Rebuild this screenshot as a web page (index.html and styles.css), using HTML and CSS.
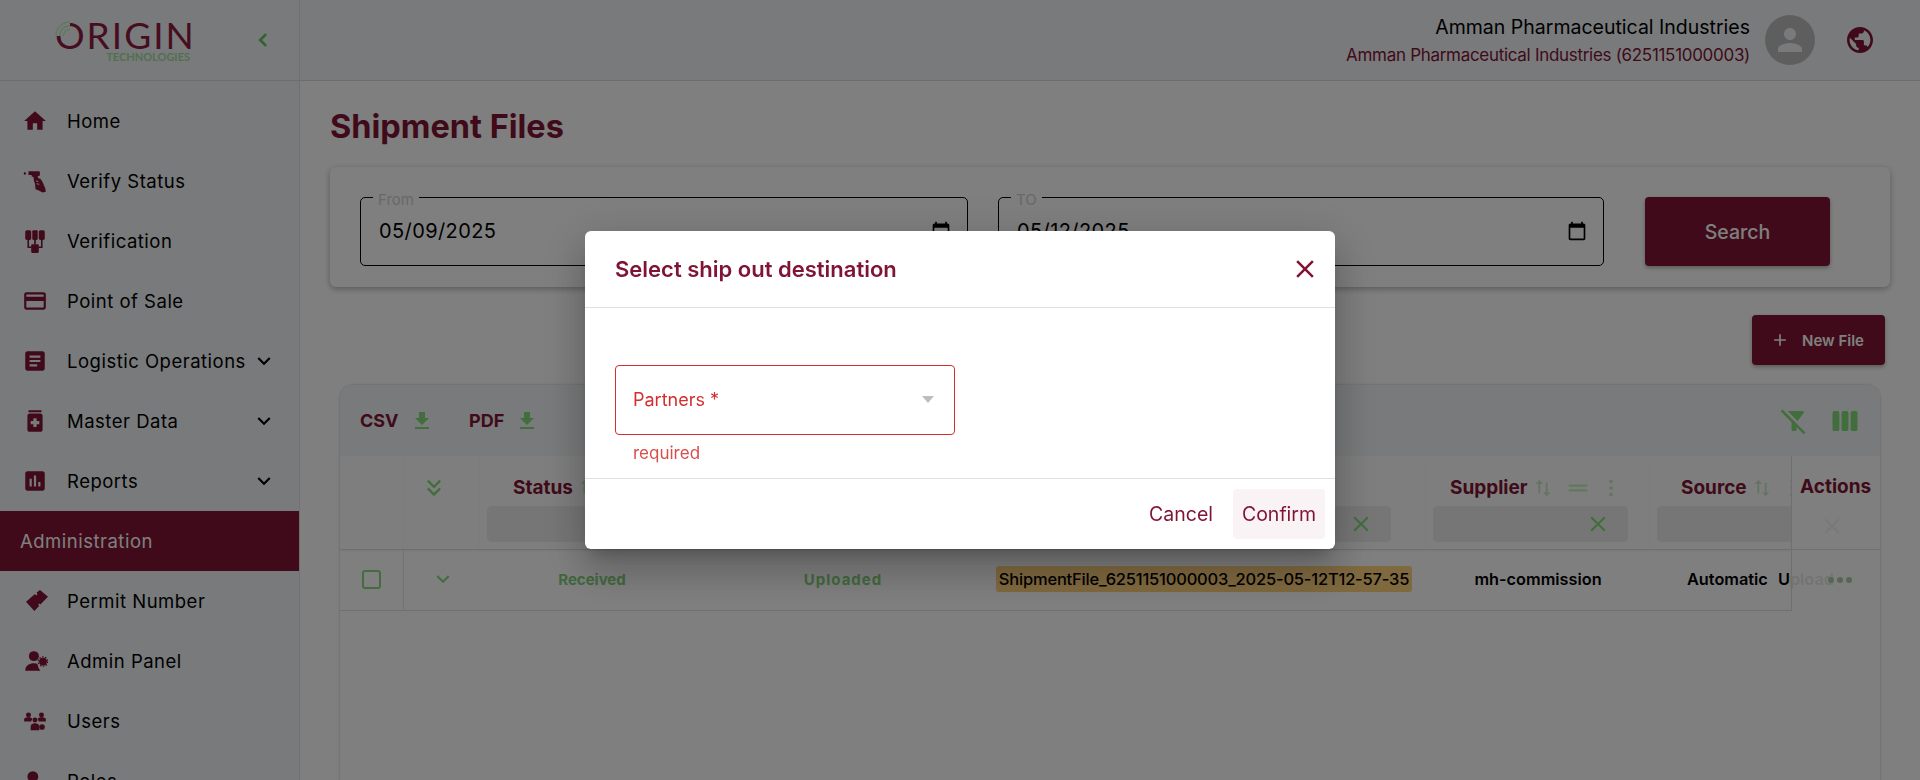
FILE: index.html
```html
<!DOCTYPE html>
<html lang="en">

<head>
  <meta charset="UTF-8">
  <title>Shipment Files</title>
  <link rel="stylesheet" href="styles.css">
</head>

<body>
  <aside class="sidebar">
    <div class="brand">
      <div class="logo">
        <div class="logo-name">ORIGIN</div>
        <svg class="logo-arcs" viewBox="0 0 16 16"><path d="M0 0h16v16H0z" fill="#f3f5f7"/><path d="M1 16A15 15 0 0 1 16 1M5 16A11 11 0 0 1 16 5M9 16A7 7 0 0 1 16 9" fill="none" stroke="#b8f0b0" stroke-width="1.3"/></svg>
        <div class="logo-sub">TECHNOLOGIES</div>
      </div>
      <svg class="collapse" viewBox="0 0 24 24"><path d="M15.41 7.41 14 6l-6 6 6 6 1.41-1.41L10.83 12z"/></svg>
    </div>
    <nav class="menu">
      <a class="item"><svg class="ico" viewBox="0 0 24 24"><path d="M10 20v-6h4v6h5v-8h3L12 3 2 12h3v8z"/></svg>Home</a>
      <a class="item"><svg class="ico" viewBox="0 0 24 24"><path fill-rule="evenodd" d="M2.500 3.500 4 5 2.500 6.500 1.500 5zM6 3h10l.5 1v3l-2 .5.5 2 2 .5 2 3 2.500 6 .5 3-3 .5-4-2-2.500-1-.5-5-1-3-.5-3.500H9V6.500H6zM13 11.500l2 .5v1l-2-.5zM13.500 14l2.500.5v1l-2.500-.5z"/></svg>Verify Status</a>
      <a class="item"><svg class="ico" viewBox="0 0 24 24"><rect x="3" y="2" width="5.500" height="9" rx="1.500"/><rect x="9.500" y="2" width="5" height="9" rx="1"/><rect x="15.500" y="2" width="5.500" height="9" rx="1.500"/><path d="M5 11h1.500v6H9v1.500H5zM19 11h-1.500v6H15v1.500h4zM11.200 11h1.600v4h-1.600z"/><rect x="8.500" y="15" width="7" height="8" rx="1"/></svg>Verification</a>
      <a class="item"><svg class="ico" viewBox="0 0 24 24"><path d="M20 4H4c-1.110 0-1.990.89-1.990 2L2 18c0 1.110.89 2 2 2h16c1.110 0 2-.89 2-2V6c0-1.110-.89-2-2-2zm0 14H4v-6h16v6zm0-10H4V6h16v2z"/></svg>Point of Sale</a>
      <a class="item"><svg class="ico" viewBox="0 0 24 24"><path d="M19 3H5c-1.100 0-2 .9-2 2v14c0 1.100.9 2 2 2h14c1.100 0 2-.9 2-2V5c0-1.100-.9-2-2-2zm-5 14H7v-2h7v2zm3-4H7v-2h10v2zm0-4H7V7h10v2z"/></svg>Logistic Operations<svg class="caret" viewBox="0 0 24 24"><path d="M16.59 8.59 12 13.170 7.41 8.59 6 10l6 6 6-6z"/></svg></a>
      <a class="item"><svg class="ico" viewBox="0 0 24 24"><path d="M6 2h12v2H6zm11 3H7c-1.100 0-2 .9-2 2v13c0 1.100.9 2 2 2h10c1.100 0 2-.9 2-2V7c0-1.100-.9-2-2-2zm-1 10h-2.500v2.500h-3V15H8v-3h2.500V9.500h3V12H16v3z"/></svg>Master Data<svg class="caret" viewBox="0 0 24 24"><path d="M16.59 8.59 12 13.170 7.41 8.59 6 10l6 6 6-6z"/></svg></a>
      <a class="item"><svg class="ico" viewBox="0 0 24 24"><path d="M19 3H5c-1.100 0-2 .9-2 2v14c0 1.100.9 2 2 2h14c1.100 0 2-.9 2-2V5c0-1.100-.9-2-2-2zM9 17H7v-7h2v7zm4 0h-2V7h2v10zm4 0h-2v-4h2v4z"/></svg>Reports<svg class="caret" viewBox="0 0 24 24"><path d="M16.59 8.59 12 13.170 7.41 8.59 6 10l6 6 6-6z"/></svg></a>
      <div class="section">Administration</div>
      <a class="item"><svg class="ico" viewBox="0 0 24 24"><path d="M3.700 12.600 12 5.500l1 1.500 1.200-1-.7-1.800 3.100-2.400L24 8l-7 7.300-1-1-1 1 .8 1.200-4.400 4.700z"/></svg>Permit Number</a>
      <a class="item"><svg class="ico" viewBox="0 0 24 24"><circle cx="11" cy="7.500" r="4.600"/><path d="M3 21c0-5 4-7 8-7 1.200 0 2.300.2 3.300.5.200 2.500 1.200 4.800 2.700 6.500z"/><circle cx="19.400" cy="12.500" r="3.600"/><circle cx="19.400" cy="12.500" r="4.300" fill="none" stroke="currentColor" stroke-width="1.200" stroke-dasharray="1.400 1.300"/></svg>Admin Panel</a>
      <a class="item"><svg class="ico" viewBox="0 0 24 24"><circle cx="6" cy="6.500" r="2.300"/><circle cx="18" cy="6.500" r="2.300"/><circle cx="12" cy="11" r="2.300"/><path d="M2 10c0-1 2-1.500 4-1.500s3 .5 3.500 1.500l-1 2.500H2zM22 10c0-1-2-1.500-4-1.500s-3 .5-3.500 1.500l1 2.500H22zM8 17c0-2 2-3 4-3s4 1 4 3v3.500H8z"/><circle cx="18.500" cy="17.500" r="2.600"/></svg>Users</a>
      <a class="item"><svg class="ico" viewBox="0 0 24 24"><path d="M10 3a5 5 0 1 1 0 10 5 5 0 0 1 0-10zM10 15c3.500 0 9 1.500 9 4.500V22H1v-2.500C1 16.500 6.500 15 10 15z"/></svg>Roles</a>
    </nav>
  </aside>

  <div class="content">
    <header class="topbar">
      <div class="account">
        <div class="account-name">Amman Pharmaceutical Industries</div>
        <div class="account-org">Amman Pharmaceutical Industries (6251151000003)</div>
      </div>
      <div class="avatar"><svg viewBox="0 0 24 24"><path d="M12 12c2.210 0 4-1.790 4-4s-1.790-4-4-4-4 1.790-4 4 1.790 4 4 4zm0 2c-2.670 0-8 1.340-8 4v2h16v-2c0-2.660-5.330-4-8-4z"/></svg></div>
      <svg class="globe" viewBox="2 2 20 20"><path d="M12 2C6.480 2 2 6.480 2 12s4.480 10 10 10 10-4.480 10-10S17.520 2 12 2zm-1 17.930c-3.950-.49-7-3.850-7-7.930 0-.62.08-1.210.21-1.790L9 15v1c0 1.100.9 2 2 2v1.930zm6.900-2.540c-.26-.81-1-1.390-1.900-1.390h-1v-3c0-.55-.45-1-1-1H8v-2h2c.55 0 1-.45 1-1V7h2c1.100 0 2-.9 2-2v-.41c2.930 1.190 5 4.060 5 7.410 0 2.080-.8 3.970-2.100 5.390z"/></svg>
    </header>

    <main class="page">
      <h1 class="title">Shipment Files</h1>

      <section class="filters">
        <fieldset class="date-field">
          <legend>From</legend>
          <span class="date-value">05/09/2025</span>
          <svg class="calendar" viewBox="0 0 24 24"><path d="M20 3h-1V1h-2v2H7V1H5v2H4c-1.100 0-2 .9-2 2v16c0 1.100.9 2 2 2h16c1.100 0 2-.9 2-2V5c0-1.100-.9-2-2-2zm0 18H4V8h16v13z"/></svg>
        </fieldset>
        <fieldset class="date-field">
          <legend>TO</legend>
          <span class="date-value">05/12/2025</span>
          <svg class="calendar" viewBox="0 0 24 24"><path d="M20 3h-1V1h-2v2H7V1H5v2H4c-1.100 0-2 .9-2 2v16c0 1.100.9 2 2 2h16c1.100 0 2-.9 2-2V5c0-1.100-.9-2-2-2zm0 18H4V8h16v13z"/></svg>
        </fieldset>
        <button class="search-btn">Search</button>
      </section>

      <div class="new-file-row">
        <button class="new-file"><svg viewBox="0 0 24 24"><path d="M19 13h-6v6h-2v-6H5v-2h6V5h2v6h6v2z"/></svg>New File</button>
      </div>

      <section class="table-card">
        <div class="toolbar">
          <span class="export">CSV<svg viewBox="0 0 24 24"><path d="M19 9h-4V3H9v6H5l7 7 7-7zM5 18v2h14v-2H5z"/></svg></span>
          <span class="export">PDF<svg viewBox="0 0 24 24"><path d="M19 9h-4V3H9v6H5l7 7 7-7zM5 18v2h14v-2H5z"/></svg></span>
          <span class="toolbar-right">
            <svg viewBox="0 0 24 24"><path d="M19.79 5.610C20.300 4.950 19.830 4 19 4H6.830l7.970 7.970 4.990-6.360zM2.810 2.810 1.390 4.220 10 13v6c0 .55.450 1 1 1h2c.55 0 1-.45 1-1v-2.170l5.780 5.780 1.410-1.410L2.810 2.810z"/></svg>
            <svg viewBox="0 0 24 24"><rect x="2" y="4" width="5.500" height="16" rx="1.500"/><rect x="9.250" y="4" width="5.500" height="16" rx="1.500"/><rect x="16.500" y="4" width="5.500" height="16" rx="1.500"/></svg>
          </span>
        </div>

        <div class="grid">
          <div class="head-cell"></div>
          <div class="head-cell expand-all"><svg viewBox="0 0 24 24"><path d="M18 6.410 16.590 5 12 9.580 7.410 5 6 6.410l6 6zM18 13l-1.410-1.410L12 16.170l-4.590-4.580L6 13l6 6z"/></svg></div>
          <div class="head-cell">
            <div class="col-label">
              <span class="col-name">Status</span>
              <svg class="faint" viewBox="0 0 24 24"><path d="M8 3 4 7.500h3V18h2V7.500h3zM16 21l4-4.500h-3V6h-2v10.500h-3z"/></svg>
            </div>
            <div class="col-filter"></div>
          </div>
          <div class="head-cell">
            <div class="col-label"></div>
            <div class="col-filter"></div>
          </div>
          <div class="head-cell">
            <div class="col-label"></div>
            <div class="col-filter"><svg viewBox="0 0 24 24"><path d="M19 6.410 17.590 5 12 10.590 6.410 5 5 6.410 10.590 12 5 17.590 6.410 19 12 13.410 17.590 19 19 17.590 13.410 12z"/></svg></div>
          </div>
          <div class="head-cell">
            <div class="col-label">
              <span class="col-name">Supplier</span>
              <svg class="faint" viewBox="0 0 24 24"><path d="M8 3 4 7.500h3V18h2V7.500h3zM16 21l4-4.500h-3V6h-2v10.500h-3z"/></svg>
              <svg class="drag" viewBox="0 0 24 24"><path d="M20 9H4v2h16V9zM4 15h16v-2H4v2z"/></svg>
              <svg class="faint-dots" viewBox="0 0 24 24"><circle cx="12" cy="5" r="2"/><circle cx="12" cy="12" r="2"/><circle cx="12" cy="19" r="2"/></svg>
            </div>
            <div class="col-filter"><svg viewBox="0 0 24 24"><path d="M19 6.410 17.590 5 12 10.590 6.410 5 5 6.410 10.590 12 5 17.590 6.410 19 12 13.410 17.590 19 19 17.590 13.410 12z"/></svg></div>
          </div>
          <div class="head-cell head-source">
            <div class="col-label">
              <span class="col-name">Source</span>
              <svg class="faint" viewBox="0 0 24 24"><path d="M8 3 4 7.500h3V18h2V7.500h3zM16 21l4-4.500h-3V6h-2v10.500h-3z"/></svg>
              <svg class="faint-dots" viewBox="0 0 24 24"><circle cx="12" cy="5" r="2"/><circle cx="12" cy="12" r="2"/><circle cx="12" cy="19" r="2"/></svg>
            </div>
            <div class="col-filter"></div>
          </div>

          <div class="cell cell-check"><span class="checkbox"></span></div>
          <div class="cell cell-expand"><svg viewBox="0 0 24 24"><path d="M16.59 8.59 12 13.170 7.41 8.59 6 10l6 6 6-6z"/></svg></div>
          <div class="cell state">Received</div>
          <div class="cell state state-wide">Uploaded</div>
          <div class="cell"><mark class="file-name">ShipmentFile_6251151000003_2025-05-12T12-57-35</mark></div>
          <div class="cell strong">mh-commission</div>
          <div class="cell strong cell-source">Automatic Upload</div>
        </div>

        <div class="actions-col">
          <div class="actions-head">
            <span class="col-name">Actions</span>
            <svg viewBox="0 0 24 24"><path d="M19 6.410 17.590 5 12 10.590 6.410 5 5 6.410 10.590 12 5 17.590 6.410 19 12 13.410 17.590 19 19 17.590 13.410 12z"/></svg>
          </div>
          <div class="actions-cell"><i></i><i></i><i></i></div>
        </div>
      </section>
    </main>
  </div>

  <div class="backdrop">
    <div class="dialog">
      <div class="dialog-head">
        <h2>Select ship out destination</h2>
        <svg viewBox="0 0 24 24"><path d="M19 6.410 17.590 5 12 10.590 6.410 5 5 6.410 10.590 12 5 17.590 6.410 19 12 13.410 17.590 19 19 17.590 13.410 12z"/></svg>
      </div>
      <div class="dialog-body">
        <div class="select">
          <span>Partners *</span>
          <i class="arrow"></i>
        </div>
        <div class="helper">required</div>
      </div>
      <div class="dialog-foot">
        <button class="text-btn">Cancel</button>
        <button class="text-btn text-btn-hover">Confirm</button>
      </div>
    </div>
  </div>
</body>

</html>
```
FILE: styles.css
```css
* {
  box-sizing: border-box;
}

html,
body {
  height: 100%;
  margin: 0;
}

body {
  display: flex;
  height: 780px;
  overflow: hidden;
  background-color: #fff;
  color: #000;
  font-family: Inter, "Liberation Sans", sans-serif;
}

svg {
  display: block;
  fill: currentColor;
}

/* sidebar */
.sidebar {
  flex: none;
  width: 300px;
  height: 780px;
  overflow: hidden;
  background-color: #f3f5f7;
  border-right: 1px solid #e0e0e0;
}

.brand {
  display: flex;
  align-items: center;
  height: 81px;
  padding-left: 55px;
  border-bottom: 1px solid #dadada;
}

.logo {
  position: relative;
  width: 140px;
  font-family: Lato, sans-serif;
  text-align: right;
}

.logo-arcs {
  position: absolute;
  top: 3px;
  left: 0;
  width: 15px;
  height: 15px;
}

.logo-name {
  color: #8f1b40;
  font-size: 37px;
  line-height: 34px;
  letter-spacing: 2px;
  text-align: left;
}

.logo-sub {
  padding-right: 5px;
  color: #a5dfa0;
  font-size: 11px;
  font-weight: 700;
  line-height: 10px;
}

.collapse {
  width: 26px;
  height: 26px;
  margin-left: 55px;
  color: #62c45c;
  stroke: #62c45c;
  stroke-width: .6;
}

.menu {
  padding-top: 10px;
}

.item {
  display: flex;
  align-items: center;
  height: 60px;
  padding-left: 22px;
  font-size: 18.5px;
  letter-spacing: .5px;
}

.ico {
  flex: none;
  width: 26px;
  height: 26px;
  margin-right: 19px;
  color: #801434;
}

.caret {
  width: 26px;
  height: 26px;
  margin-left: auto;
  margin-right: 22px;
}

.section {
  display: flex;
  align-items: center;
  height: 60px;
  padding-left: 20px;
  background-color: #801434;
  color: #fff;
  font-size: 18.5px;
  letter-spacing: .5px;
}

/* top bar */
.content {
  display: flex;
  flex: 1;
  flex-direction: column;
  min-width: 0;
}

.topbar {
  display: flex;
  flex: none;
  align-items: center;
  justify-content: flex-end;
  height: 81px;
  padding-right: 47px;
  background-color: #f3f5f7;
  border-bottom: 1px solid #dadada;
}

.account {
  padding-top: 2px;
  text-align: right;
}

.account-name {
  font-size: 19.5px;
  line-height: 28px;
}

.account-org {
  color: #801434;
  font-size: 17px;
  line-height: 28px;
  letter-spacing: -.3px;
}

.avatar {
  display: flex;
  align-items: center;
  justify-content: center;
  width: 50px;
  height: 50px;
  margin-left: 15px;
  border-radius: 50%;
  background-color: #bdbdbd;
  color: #f3f5f7;
}

.avatar svg {
  width: 36px;
  height: 36px;
}

.globe {
  width: 26px;
  height: 26px;
  margin-left: 32px;
  color: #801434;
}

/* page */
.page {
  flex: 1;
  min-height: 0;
  padding: 0 30px;
}

.title {
  margin: 26px 0 20px;
  color: #801434;
  font-size: 32.5px;
  font-weight: 700;
  line-height: 40px;
}

.filters {
  display: flex;
  gap: 30px;
  align-items: flex-start;
  height: 120px;
  padding: 22px 60px 0 30px;
  border-radius: 6px;
  background-color: #fff;
  box-shadow: 0 2px 6px rgba(0, 0, 0, .3);
}

.date-field {
  display: flex;
  flex: 1;
  align-items: center;
  height: 77px;
  margin: 0;
  padding: 0 16px 8px 18px;
  border: 1px solid #000;
  border-radius: 5px;
}

.date-field:first-child {
  flex: 0 0 608px;
}

.date-field legend {
  margin-left: -6px;
  padding: 6px 5px 0;
  color: #d0d0d0;
  font-size: 15px;
  line-height: 10px;
}

.date-value {
  font-size: 20px;
  letter-spacing: .4px;
}

.calendar {
  width: 20px;
  height: 20px;
  margin-left: auto;
}

.search-btn {
  flex: none;
  width: 185px;
  height: 69px;
  margin: 8px 0 0 11px;
  border: 0;
  border-radius: 4px;
  background-color: #801434;
  box-shadow: 0 2px 4px rgba(0, 0, 0, .3);
  color: #fff;
  font-family: inherit;
  font-size: 19.5px;
  font-weight: 500;
}

.new-file-row {
  display: flex;
  justify-content: flex-end;
  margin: 28px 5px 20px 0;
}

.new-file {
  display: flex;
  align-items: center;
  width: 133px;
  height: 50px;
  padding: 0 0 0 18px;
  border: 0;
  border-radius: 4px;
  background-color: #801434;
  box-shadow: 0 2px 4px rgba(0, 0, 0, .3);
  color: #fff;
  font-family: inherit;
  font-size: 15px;
  font-weight: 600;
}

.new-file svg {
  width: 20px;
  height: 20px;
  margin-right: 12px;
}

/* table */
.table-card {
  position: relative;
  height: 400px;
  margin: 0 10px;
  overflow: hidden;
  border-radius: 14px 14px 0 0;
  background-color: #fff;
  box-shadow: 0 0 3px rgba(0, 0, 0, .25);
}

.toolbar {
  display: flex;
  align-items: center;
  height: 71px;
  padding: 0 20px;
  background-color: #f3f5f7;
}

.export {
  display: flex;
  align-items: center;
  width: 109px;
  color: #801434;
  font-size: 18px;
  font-weight: 700;
}

.export svg {
  width: 24px;
  height: 24px;
  margin-left: 11px;
  color: #84dc7c;
}

.toolbar-right {
  display: flex;
  gap: 21px;
  margin-left: auto;
  color: #84dc7c;
}

.toolbar-right svg {
  width: 30px;
  height: 30px;
}

.grid {
  display: grid;
  grid-template-columns: 64px 76px 224px 278px 444px 224px 240px;
  grid-template-rows: 94px 61px;
}

.head-cell {
  padding: 0 7px;
  border-bottom: 1px solid #dedede;
  background-color: #fdfdfd;
  box-shadow: 0 1px 2px rgba(0, 0, 0, .06);
}

.head-cell:nth-child(5) {
  padding-right: 35px;
}

.head-cell:nth-child(6) {
  padding-right: 22px;
}

.expand-all {
  padding: 18px 0 0 16px;
  color: #84dc7c;
}

.expand-all svg {
  width: 28px;
  height: 28px;
}

.col-label {
  display: flex;
  align-items: center;
  height: 49px;
  padding-top: 14px;
}

.col-name {
  color: #801434;
  font-size: 19px;
  font-weight: 700;
}

.head-cell:nth-child(3) .col-label {
  padding-left: 26px;
}

.head-cell:nth-child(6) .col-label {
  padding-left: 17px;
}

.head-source .col-label {
  padding-left: 24px;
}

.faint {
  flex: none;
  width: 22px;
  height: 22px;
  margin-left: 4px;
  color: #c9e8c4;
}

.drag {
  flex: none;
  width: 28px;
  height: 28px;
  margin-left: 10px;
  color: #c0f5b8;
}

.faint-dots {
  flex: none;
  width: 22px;
  height: 22px;
  margin-left: 8px;
  color: #c9e8c4;
}

.col-filter {
  display: flex;
  align-items: center;
  justify-content: flex-end;
  height: 36px;
  margin-top: 1px;
  padding-right: 17px;
  border-radius: 5px;
  background-color: #ededed;
  color: #84dc7c;
}

.col-filter svg {
  width: 26px;
  height: 26px;
}

.cell {
  display: flex;
  align-items: center;
  justify-content: center;
  padding-bottom: 2px;
  border-bottom: 1px solid #dedede;
  font-size: 17px;
}

.cell-check {
  border-right: 1px solid #e4e4e4;
}

.checkbox {
  width: 19px;
  height: 19px;
  border: 2px solid #84dc7c;
  border-radius: 3px;
}

.cell-expand {
  justify-content: flex-start;
  padding-left: 26px;
  color: #84dc7c;
}

.cell-expand svg {
  width: 26px;
  height: 26px;
}

.state {
  color: #84d07c;
  font-size: 15px;
  font-weight: 700;
}

.state-wide {
  letter-spacing: 1px;
}

.file-name {
  padding: 3px;
  border-radius: 3px;
  background-color: #ffd27e;
  color: #000;
  font-size: 16.5px;
  font-weight: 500;
  letter-spacing: -.2px;
  white-space: nowrap;
}

.strong {
  font-size: 16.3px;
  font-weight: 600;
}

.cell-source {
  justify-content: flex-start;
  padding-left: 37px;
  word-spacing: 6px;
  white-space: nowrap;
}

.actions-col {
  position: absolute;
  top: 71px;
  right: 0;
  width: 89px;
  height: 155px;
  border-left: 1px solid #dedede;
  background-color: rgba(255, 255, 255, .9);
}

.actions-head {
  height: 94px;
  padding: 19px 0 0 8px;
  border-bottom: 1px solid #dedede;
}

.actions-head svg {
  width: 26px;
  height: 26px;
  margin: 15px 0 0 19px;
  color: #f2f2f2;
}

.actions-cell {
  display: flex;
  gap: 3px;
  align-items: center;
  justify-content: flex-end;
  height: 60px;
  padding-right: 28px;
}

.actions-cell i {
  width: 6px;
  height: 6px;
  border-radius: 50%;
  background-color: #a9cfa4;
}

/* dialog */
.backdrop {
  position: fixed;
  top: 0;
  right: 0;
  bottom: 0;
  left: 0;
  background-color: rgba(0, 0, 0, .5);
}

.dialog {
  position: absolute;
  top: 231px;
  left: 585px;
  display: flex;
  flex-direction: column;
  width: 750px;
  height: 318px;
  border-radius: 6px;
  background-color: #fff;
  box-shadow: 0 11px 15px -7px rgba(0, 0, 0, .2), 0 24px 38px 3px rgba(0, 0, 0, .14), 0 9px 46px 8px rgba(0, 0, 0, .12);
}

.dialog-head {
  display: flex;
  flex: none;
  align-items: center;
  justify-content: space-between;
  height: 77px;
  padding: 0 15px 1px 30px;
  border-bottom: 1px solid #e0e0e0;
  color: #7f1435;
}

.dialog-head h2 {
  margin: 0;
  font-size: 22px;
  font-weight: 600;
}

.dialog-head svg {
  width: 30px;
  height: 30px;
}

.dialog-body {
  flex: 1;
  padding: 57px 30px 0;
}

.select {
  display: flex;
  align-items: center;
  justify-content: space-between;
  width: 340px;
  height: 70px;
  padding: 0 20px 2px 17px;
  border: 1px solid #d32f2f;
  border-radius: 4px;
  color: #d32f2f;
  font-size: 18px;
}

.arrow {
  width: 0;
  height: 0;
  border-top: 7px solid #bdbdbd;
  border-right: 6px solid transparent;
  border-left: 6px solid transparent;
}

.helper {
  margin: 8px 0 0 18px;
  color: #d32f2f;
  font-size: 17px;
  line-height: 20px;
  opacity: .85;
}

.dialog-foot {
  display: flex;
  flex: none;
  gap: 10px;
  align-items: center;
  justify-content: flex-end;
  height: 71px;
  padding-right: 10px;
  border-top: 1px solid #e0e0e0;
}

.text-btn {
  height: 50px;
  padding: 0 10px;
  border: 0;
  border-radius: 4px;
  background: none;
  color: #7f1435;
  font-family: inherit;
  font-size: 19.5px;
}

.text-btn-hover {
  width: 92px;
  padding: 0;
  background-color: #f9f3f5;
}
```
